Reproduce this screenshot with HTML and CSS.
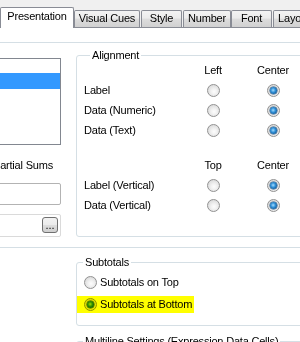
FILE: index.html
```html
<!DOCTYPE html>
<html>
<head>
<meta charset="utf-8">
<link rel="stylesheet" href="styles.css">
</head>
<body>
<div class="tabs">
  <div class="tab sel t1">Presentation</div>
  <div class="tab t2">Visual Cues</div>
  <div class="tab t3">Style</div>
  <div class="tab t4">Number</div>
  <div class="tab t5">Font</div>
  <div class="tab t6">Layout</div>
</div>
<div class="panel">
  <div class="topline"></div>
  <div class="sec1">
    <div class="left">
      <div class="listbox"><div class="hl"></div></div>
      <div class="psums">Partial Sums</div>
      <div class="input"></div>
      <div class="pick"><div class="btn">...</div></div>
    </div>
    <div class="grp align">
      <div class="gt">Alignment</div>
      <div class="algrid">
        <span></span><span class="hd">Left</span><span class="hd">Center</span>
        <span>Label</span><span class="r"></span><span class="r on"></span>
        <span>Data (Numeric)</span><span class="r"></span><span class="r on"></span>
        <span>Data (Text)</span><span class="r"></span><span class="r on"></span>
        <span class="spacer"></span>
        <span></span><span class="hd">Top</span><span class="hd">Center</span>
        <span>Label (Vertical)</span><span class="r"></span><span class="r on"></span>
        <span>Data (Vertical)</span><span class="r"></span><span class="r on"></span>
      </div>
    </div>
  </div>
  <div class="midline"></div>
  <div class="sec2">
    <div class="grp subt">
      <div class="gt">Subtotals</div>
      <div class="opt"><span class="r"></span><span>Subtotals on Top</span></div>
      <div class="opt hlrow"><span class="r on"></span><span>Subtotals at Bottom</span></div>
    </div>
    <div class="grp multi">
      <div class="gt">Multiline Settings (Expression Data Cells)</div>
    </div>
  </div>
</div>
</body>
</html>
```
FILE: styles.css
```css
html, body {
  margin: 0;
  padding: 0;
}
body {
  width: 300px;
  height: 342px;
  overflow: hidden;
  background: #ffffff;
  color: #000000;
  font-family: "Liberation Sans", Arial, sans-serif;
  font-size: 11px;
  line-height: 13px;
  letter-spacing: -0.2px;
}

/* tabs */
.tabs {
  display: flex;
  align-items: flex-end;
  height: 27px;
  background: #f0f0f0;
  border-bottom: 1px solid #898c95;
}
.tab {
  box-sizing: border-box;
  flex: none;
  height: 17px;
  padding-top: 1px;
  border: 1px solid #898c95;
  border-bottom: 0;
  border-radius: 2px 2px 0 0;
  background: linear-gradient(#f3f3f3, #ebebeb 45%, #dddddd 50%, #d1d1d1);
  text-align: center;
  white-space: nowrap;
  overflow: hidden;
}
.tab.sel {
  height: 21px;
  margin-bottom: -1px;
  padding-top: 2px;
  background: #ffffff;
}
.t1 { width: 74px; }
.t2 { width: 66px; }
.t3 { width: 41px; margin-left: 1px; }
.t4 { width: 48px; margin-left: 1px; }
.t5 { width: 41px; }
.t6 { width: 42px; margin-left: 1px; }

/* panel */
.topline {
  margin-top: 14px;
  border-top: 1px solid #d5dfe5;
}
.midline {
  margin-top: 10px;
  border-top: 1px solid #d5dfe5;
}
.sec1 {
  display: flex;
  align-items: flex-start;
}
.left {
  flex: none;
  width: 61px;
}
.listbox {
  box-sizing: border-box;
  width: 71px;
  height: 87px;
  margin: 15px 0 0 -10px;
  padding-top: 14px;
  border: 1px solid #828790;
}
.hl {
  height: 16px;
  background: #3399ff;
}
.psums {
  margin: 14px 0 0 -7px;
  white-space: nowrap;
}
.input {
  box-sizing: border-box;
  width: 71px;
  height: 22px;
  margin: 11px 0 0 -10px;
  border: 1px solid #b3b3b3;
  border-radius: 2px;
}
.pick {
  box-sizing: border-box;
  display: flex;
  justify-content: flex-end;
  width: 71px;
  height: 23px;
  margin: 9px 0 0 -10px;
  padding: 2px 2px 0 0;
  border: 1px solid #dadada;
  border-radius: 2px;
}
.btn {
  box-sizing: border-box;
  width: 16px;
  height: 16px;
  border: 1px solid #707070;
  border-radius: 3px;
  background: linear-gradient(#f2f2f2, #ebebeb 50%, #dddddd 51%, #cfcfcf);
  text-align: center;
  line-height: 15px;
  letter-spacing: 0;
}

/* group boxes */
.grp {
  box-sizing: border-box;
  flex: none;
  width: 250px;
  border: 1px solid #d5dfe5;
  border-radius: 3px;
}
.gt {
  width: max-content;
  margin: -7px 0 0 6px;
  padding: 0 2px;
  background: #ffffff;
  white-space: nowrap;
}
.align {
  margin: 12px 0 0 15px;
  padding: 0 0 21px 7px;
}
.algrid {
  display: grid;
  grid-template-columns: 99px 60px 60px;
  grid-template-rows: 20px 20px 20px 20px 15px 20px 20px 20px;
  line-height: 20px;
  margin-top: -2px;
  white-space: nowrap;
}
.hd {
  justify-self: center;
}
.spacer {
  grid-column: 1 / -1;
}
.algrid .r {
  justify-self: center;
  align-self: center;
}

.sec2 {
  padding-left: 76px;
}
.subt {
  margin-top: 14px;
  padding-bottom: 12px;
}
.opt {
  display: flex;
  align-items: center;
  gap: 3px;
  width: max-content;
  height: 17px;
  line-height: 17px;
  margin-top: 5px;
  padding: 0 2px 0 7px;
}
.hlrow {
  background: #ffff00;
}
.hlrow .r {
  mix-blend-mode: multiply;
}
.multi {
  margin-top: 15px;
  height: 40px;
}

/* radio buttons */
.r {
  box-sizing: border-box;
  display: flex;
  align-items: center;
  justify-content: center;
  flex: none;
  width: 13px;
  height: 13px;
  border-radius: 50%;
  border: 1px solid #929292;
  background: radial-gradient(circle at 55% 60%, #fdfdfd 0, #f2f2f2 30%, #dedede 70%, #cbcbcb 100%);
}
.r.on::after {
  content: "";
  width: 7px;
  height: 7px;
  border-radius: 50%;
  background: radial-gradient(circle at 45% 45%, #a4dcff 0, #3392d8 40%, #0e5a9c 75%, #0a3a68 100%);
  box-shadow: 0 0 0 0.5px #23507a;
}
```
